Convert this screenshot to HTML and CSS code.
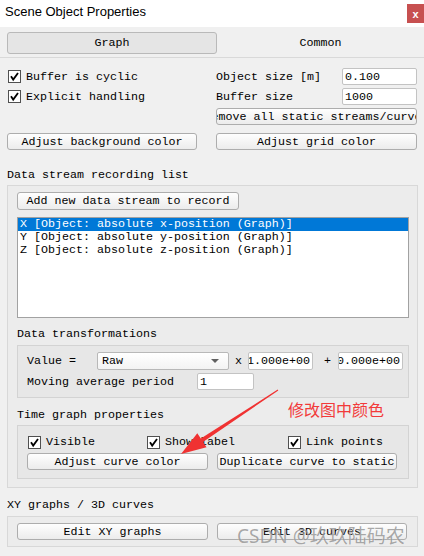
FILE: index.html
```html
<!DOCTYPE html>
<html>
<head>
<meta charset="utf-8">
<title>Scene Object Properties</title>
<link rel="stylesheet" href="styles.css">
</head>
<body>
<div class="window">
  <div class="titlebar">
    <span class="title">Scene Object Properties</span>
    <span class="close">x</span>
  </div>

  <div class="tabs">
    <div class="tab active">Graph</div>
    <div class="tab plain">Common</div>
  </div>

  <div class="top-grid">
    <div class="check">
      <svg class="cb" width="13" height="13" viewBox="0 0 13 13"><rect x="0.5" y="0.5" width="12" height="12" fill="#fff" stroke="#505050"/><path d="M3 6.3 L5.2 9.6 L10 3" fill="none" stroke="#000" stroke-width="1.8"/></svg>
      <span>Buffer is cyclic</span>
    </div>
    <div class="field">
      <span class="field-label">Object size [m]</span>
      <div class="input field-input">0.100</div>
    </div>
    <div class="check">
      <svg class="cb" width="13" height="13" viewBox="0 0 13 13"><rect x="0.5" y="0.5" width="12" height="12" fill="#fff" stroke="#505050"/><path d="M3 6.3 L5.2 9.6 L10 3" fill="none" stroke="#000" stroke-width="1.8"/></svg>
      <span>Explicit handling</span>
    </div>
    <div class="field">
      <span class="field-label">Buffer size</span>
      <div class="input field-input">1000</div>
    </div>
    <div class="spacer"></div>
    <div class="btn clip"><span>Remove all static streams/curves</span></div>
    <div class="btn last">Adjust background color</div>
    <div class="btn last">Adjust grid color</div>
  </div>

  <div class="section-label">Data stream recording list</div>
  <div class="group outer">
    <div class="btn add">Add new data stream to record</div>
    <div class="list">
      <div class="row selected">X [Object: absolute x-position (Graph)]</div>
      <div class="row">Y [Object: absolute y-position (Graph)]</div>
      <div class="row">Z [Object: absolute z-position (Graph)]</div>
    </div>

    <div class="sub-label">Data transformations</div>
    <div class="group inner transforms">
      <div class="trow first">
        <span class="lbl-value">Value =</span>
        <div class="combo"><span>Raw</span><span class="arrow"></span></div>
        <span class="op">x</span>
        <div class="input num"><span>1.000e+00</span></div>
        <span class="op plus">+</span>
        <div class="input num"><span>0.000e+00</span></div>
      </div>
      <div class="trow">
        <span class="lbl-mov">Moving average period</span>
        <div class="input period">1</div>
      </div>
    </div>

    <div class="sub-label">Time graph properties</div>
    <div class="group inner timegraph">
      <div class="checks">
        <div class="check">
          <svg class="cb" width="13" height="13" viewBox="0 0 13 13"><rect x="0.5" y="0.5" width="12" height="12" fill="#fff" stroke="#505050"/><path d="M3 6.3 L5.2 9.6 L10 3" fill="none" stroke="#000" stroke-width="1.8"/></svg>
          <span>Visible</span>
        </div>
        <div class="check">
          <svg class="cb" width="13" height="13" viewBox="0 0 13 13"><rect x="0.5" y="0.5" width="12" height="12" fill="#fff" stroke="#505050"/><path d="M3 6.3 L5.2 9.6 L10 3" fill="none" stroke="#000" stroke-width="1.8"/></svg>
          <span>Show label</span>
        </div>
        <div class="check">
          <svg class="cb" width="13" height="13" viewBox="0 0 13 13"><rect x="0.5" y="0.5" width="12" height="12" fill="#fff" stroke="#505050"/><path d="M3 6.3 L5.2 9.6 L10 3" fill="none" stroke="#000" stroke-width="1.8"/></svg>
          <span>Link points</span>
        </div>
      </div>
      <div class="btnrow">
        <div class="btn curve">Adjust curve color</div>
        <div class="btn dup">Duplicate curve to static</div>
      </div>
    </div>
  </div>

  <div class="section-label">XY graphs / 3D curves</div>
  <div class="group outer xy">
    <div class="btn xy1">Edit XY graphs</div>
    <div class="btn xy2">Edit 3D curves</div>
  </div>

  <svg class="arrow-overlay" width="424" height="556" viewBox="0 0 424 556">
    <polygon points="278.3,390.4 203,441.9 206.5,447.2 181,454 197.3,433.3 200.8,438.5 277.7,389.6" fill="#f03232"/>
  </svg>
  <div class="annotation">修改图中颜色</div>
  <div class="watermark">CSDN @玖玖陆码农</div>
</div>
</body>
</html>
```

FILE: styles.css
```css
* {
  box-sizing: border-box;
}

html, body {
  margin: 0;
  padding: 0;
}

body {
  width: 424px;
  height: 556px;
  overflow: hidden;
  background: #f0f0f0;
  font-family: "Liberation Mono", "DejaVu Sans Mono", monospace;
  font-size: 11.67px;
  line-height: 14px;
  color: #000;
}

.window {
  position: relative;
  width: 424px;
  height: 556px;
}

/* title bar */
.titlebar {
  height: 27px;
  background: #fff;
  display: flex;
  justify-content: space-between;
  align-items: flex-start;
}

.title {
  font-family: "Liberation Sans", Arial, sans-serif;
  font-size: 13px;
  line-height: 23px;
  padding-left: 5px;
}

.close {
  width: 17px;
  height: 19px;
  margin-top: 4px;
  background: #c75050;
  color: #fff;
  font-family: "Liberation Sans", Arial, sans-serif;
  font-size: 11px;
  font-weight: bold;
  display: flex;
  align-items: center;
  justify-content: center;
}

/* tabs */
.tabs {
  height: 31px;
  display: flex;
  padding: 5px 0 0 7px;
  border-bottom: 1px solid #d9d9d9;
}

.tab {
  height: 22px;
  display: flex;
  align-items: center;
  justify-content: center;
}

.tab.active {
  width: 210px;
  background: #e5e5e5;
  border: 1px solid #b9b9b9;
  border-radius: 3px;
}

.tab.plain {
  flex: 1;
}

/* generic controls */
.btn {
  height: 17px;
  border: 1px solid #adadad;
  border-radius: 3px;
  background: linear-gradient(#fefefe, #ececec);
  display: flex;
  align-items: center;
  justify-content: center;
  white-space: nowrap;
  overflow: hidden;
}

.input {
  height: 17px;
  border: 1px solid #c3c3c3;
  border-radius: 2px;
  background: #fff;
  padding-left: 2px;
  display: flex;
  align-items: center;
  white-space: nowrap;
  overflow: hidden;
}

.check {
  display: flex;
  align-items: center;
  gap: 5px;
  white-space: nowrap;
}

.cb {
  display: block;
  margin-left: 1px;
  flex: none;
}

/* top area */
.top-grid {
  display: grid;
  grid-template-columns: 190px 201px;
  grid-template-rows: 17px 17px 17px 22px;
  column-gap: 19px;
  row-gap: 3px;
  padding: 10px 0 0 7px;
}

.top-grid .last {
  align-self: end;
}

.field {
  display: flex;
  align-items: center;
}

.field-label {
  width: 126px;
  flex: none;
}

.field-input {
  width: 75px;
}

/* sections */
.section-label {
  padding-left: 7px;
  height: 14px;
  margin-top: 18px;
}

.section-label + .group {
  margin-top: 3px;
}

.group {
  border: 1px solid #d8d8d8;
}

.group.outer {
  margin-left: 7px;
  width: 411px;
  background: #ececec;
  padding: 6px 8px 8px 9px;
}

.group.inner {
  width: 392px;
  background: #e7e7e7;
  border-color: #d3d3d3;
  padding-left: 9px;
}

.sub-label {
  height: 14px;
  margin-top: 9px;
}

.sub-label + .group {
  margin-top: 4px;
}

.btn.add {
  width: 222px;
  height: 18px;
}

.list {
  margin-top: 7px;
  width: 392px;
  height: 101px;
  border: 1px solid #a2a2a2;
  background: #fff;
}

.row {
  height: 13px;
  line-height: 13px;
  padding-left: 2px;
  white-space: nowrap;
}

.row.selected {
  background: #0078d7;
  color: #fff;
}

/* data transformations */
.transforms {
  padding-top: 6px;
  padding-bottom: 7px;
}

.trow {
  display: flex;
  align-items: center;
  height: 17px;
}

.trow.first {
  height: 18px;
  margin-bottom: 3px;
}

.lbl-value {
  width: 70px;
  flex: none;
}

.combo {
  width: 132px;
  height: 18px;
  border: 1px solid #b8b8b8;
  border-radius: 2px;
  background: linear-gradient(#ffffff, #f3f3f3);
  display: flex;
  align-items: center;
  justify-content: space-between;
  padding-left: 4px;
  padding-right: 9px;
  flex: none;
}

.arrow {
  width: 0;
  height: 0;
  border-left: 4px solid transparent;
  border-right: 4px solid transparent;
  border-top: 4px solid #606060;
}

.op {
  width: 7px;
  margin: 0 6px;
  flex: none;
}

.op.plus {
  margin: 0 7px 0 11px;
}

.input.num {
  width: 65px;
  height: 18px;
  justify-content: flex-end;
  padding-left: 0;
  padding-right: 2px;
  flex: none;
}

.lbl-mov {
  width: 170px;
  flex: none;
}

.input.period {
  width: 57px;
}

/* time graph */
.sub-label + .timegraph {
  margin-top: 3px;
}

.timegraph + .sub-label,
.transforms + .sub-label {
  margin-top: 10px;
}

.timegraph {
  padding-top: 9px;
  padding-bottom: 8px;
}

.checks {
  display: grid;
  grid-template-columns: 119px 141px auto;
  height: 13px;
}

.checks .check {
  gap: 5px;
}

.btnrow {
  display: flex;
  gap: 9px;
  margin-top: 5px;
}

.btn.curve {
  width: 181px;
}

.btn.dup {
  width: 180px;
}

/* xy */
.group.outer + .section-label {
  margin-top: 10px;
}

.section-label + .group.xy {
  margin-top: 4px;
}

.group.xy {
  display: flex;
  gap: 9px;
  padding-top: 6px;
  padding-bottom: 6px;
}

.btn.xy1 {
  width: 191px;
}

.btn.xy2 {
  width: 190px;
}

/* overlays */
.arrow-overlay {
  position: absolute;
  left: 0;
  top: 0;
  pointer-events: none;
}

.annotation {
  position: absolute;
  left: 288px;
  top: 399px;
  font-family: "Noto Sans CJK SC", sans-serif;
  font-size: 16px;
  line-height: 20px;
  color: #f23a3a;
}

.watermark {
  position: absolute;
  left: 237px;
  top: 524px;
  font-family: "Noto Sans", "Noto Sans CJK SC", sans-serif;
  font-size: 19px;
  line-height: 24px;
  color: rgba(95, 95, 95, 0.55);
  text-shadow: 0 0 1px rgba(255, 255, 255, 0.7);
  white-space: nowrap;
}
```
